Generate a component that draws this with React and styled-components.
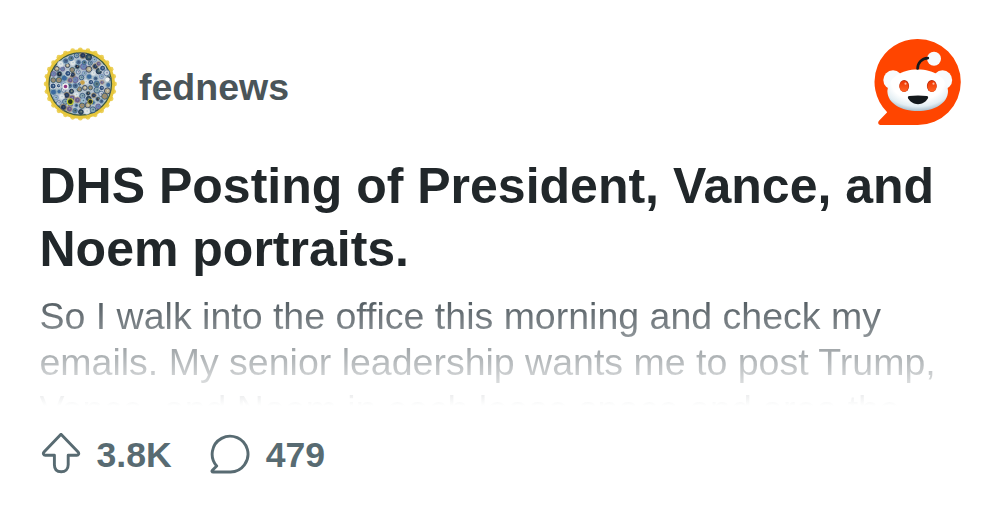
import React from "react";
import styled, { createGlobalStyle } from "styled-components";

const GlobalStyle = createGlobalStyle`
  * {
    box-sizing: border-box;
  }

  body {
    margin: 0;
    background: #ffffff;
    font-family: "Liberation Sans", Arial, sans-serif;
  }
`;

const Card = styled.article`
  display: flex;
  flex-direction: column;
  width: 1000px;
  height: 521px;
  padding: 38px 39px 0 39.5px;
  overflow: hidden;
  background: #ffffff;
`;

const Header = styled.header`
  display: flex;
  align-items: center;
  justify-content: space-between;
  height: 88px;
`;

const Community = styled.div`
  display: flex;
  align-items: center;
  gap: 19.5px;
  padding-top: 4px;
`;

const CommunityName = styled.span`
  color: #4a5559;
  font-size: 37.5px;
  font-weight: 700;
  line-height: 48px;
  margin-top: 5px;
`;

const Title = styled.h1`
  margin: 29px 0 0;
  color: #21272a;
  font-size: 50px;
  font-weight: 700;
  line-height: 62.5px;
  white-space: nowrap;
`;

const Excerpt = styled.p`
  flex: none;
  height: 113px;
  margin: 12.5px 0 0;
  overflow: hidden;
  color: transparent;
  background: linear-gradient(to bottom, #475157 0%, #ffffff 100%);
  background-clip: text;
  font-size: 37.5px;
  line-height: 46.8px;
  white-space: nowrap;
`;

const Stats = styled.footer`
  display: flex;
  align-items: center;
  gap: 37px;
  height: 50px;
  margin-top: 24.5px;
`;

const Stat = styled.div`
  display: flex;
  align-items: center;
  gap: 15px;
  color: #586b72;
  font-size: 35.6px;
  font-weight: 700;
  line-height: 48px;
`;

// rough palette of the small agency seals inside the community icon
const sealColors = [
  "#2f4f7c", "#9dbccb", "#26395a", "#5d7f88", "#e1e6e6", "#6e86b8",
  "#a38f68", "#3b6a9f", "#c3d1da", "#6a5a8c", "#345566", "#8aa9b2",
  "#4b6a90", "#b5ab8c", "#1b2b48",
];

// rings of seals, spread so that neighbours never line up
const seals = [];
[0, 6, 11.5, 17, 22.5, 28].forEach((ring, level) => {
  const count = level === 0 ? 1 : Math.round((ring * 2 * Math.PI) / 6);
  for (let i = 0; i < count; i++) {
    const n = level * 13 + i * 7 + ((i * i) % 4);
    const a = (i * 2 * Math.PI) / count + level * 0.7;
    const d = ring + ((n % 3) - 1) * 0.7;
    seals.push({
      x: 40.3 + d * Math.cos(a),
      y: 40 + d * Math.sin(a),
      r: 2.1 + (n % 4) * 0.3,
      n,
    });
  }
});

const teeth = Array.from({ length: 28 }, (_, i) => (i * 2 * Math.PI) / 28);

function CommunityIcon() {
  return (
    <svg width="80" height="80" viewBox="0 0 80 80">
      {teeth.map((a) => (
        <circle
          key={a}
          cx={40.3 + 34.2 * Math.cos(a)}
          cy={40 + 34.2 * Math.sin(a)}
          r="2.4"
          fill="#ecd05a"
        />
      ))}
      <circle cx="40.3" cy="40" r="34.8" fill="#e6c63c" />
      <circle cx="40.3" cy="40" r="31.2" fill="#b3c1cd" stroke="#3d5a45" strokeWidth="1.3" />
      {seals.map(({ x, y, r, n }) => (
        <g key={`${x}-${y}`}>
          <circle
            cx={x}
            cy={y}
            r={r}
            fill={sealColors[n % 15]}
            stroke={sealColors[(n + 4) % 15]}
            strokeWidth="0.8"
          />
          <circle
            cx={x + 0.3}
            cy={y - 0.2}
            r="0.8"
            fill={sealColors[(n * 2 + 8) % 15]}
            opacity="0.7"
          />
        </g>
      ))}
      <circle cx="25.5" cy="42.5" r="2.5" fill="#8d3482" stroke="#eeeeee" strokeWidth="1.4" />
      <circle cx="30.3" cy="57.7" r="2.9" fill="#26371d" stroke="#c4ce2e" strokeWidth="1.1" />
      <circle cx="50.3" cy="57.7" r="2.5" fill="#243329" stroke="#c6b83c" strokeWidth="0.9" />
      <circle cx="42.5" cy="38.5" r="2.3" fill="#c9a24b" />
      <circle cx="67.5" cy="35.5" r="2.2" fill="#f1f3f0" />
    </svg>
  );
}

function RedditLogo() {
  return (
    <svg width="87" height="88" viewBox="874 38 87 88">
      <defs>
        <radialGradient id="face" cx="0.5" cy="0.3" r="0.72">
          <stop offset="0.6" stopColor="#ffffff" />
          <stop offset="0.82" stopColor="#e3eef3" />
          <stop offset="1" stopColor="#9fb6c5" />
        </radialGradient>
        <linearGradient id="eye" x1="0" y1="0" x2="0" y2="1">
          <stop offset="0" stopColor="#ee3500" />
          <stop offset="1" stopColor="#ff6424" />
        </linearGradient>
      </defs>
      <path
        d="M917.8 39A43 43 0 0 1 917.8 125H880.5C878.2 125 877.4 122.5 879 120.8L887.2 112.2A42.8 42.8 0 0 1 917.8 39Z"
        fill="#ff4500"
      />
      <circle cx="893" cy="80" r="9.7" fill="#f8fbfd" />
      <circle cx="942.5" cy="80" r="9.7" fill="#f8fbfd" />
      <path
        d="M917.7 69.5C934 69.5 947 77.5 948 91C948 103.5 934 111 917.7 111S887.4 103.5 887.4 91C888.4 77.5 901.4 69.5 917.7 69.5Z"
        fill="url(#face)"
      />
      <circle cx="934" cy="58.7" r="7" fill="#f8fbfc" />
      <path
        d="M917.6 68.5C917.6 62.8 921.6 58.6 927.8 58.2"
        fill="none"
        stroke="#15191c"
        strokeWidth="2.7"
        strokeLinecap="round"
      />
      <ellipse cx="904.2" cy="86" rx="4.9" ry="5.9" fill="#b52a0c" />
      <ellipse cx="904" cy="86.3" rx="4.5" ry="5.5" fill="url(#eye)" />
      <ellipse cx="931.8" cy="86" rx="4.9" ry="5.9" fill="#b52a0c" />
      <ellipse cx="932" cy="86.3" rx="4.5" ry="5.5" fill="url(#eye)" />
      <circle cx="905.5" cy="83.7" r="1.1" fill="#ffb79b" />
      <circle cx="933.5" cy="83.7" r="1.1" fill="#ffb79b" />
      <path
        d="M909.3 96C914.5 95.3 921.5 95.3 926.7 96C928.1 96.3 928.4 97.2 927.9 98.3C926 102 922.2 104.2 918 104.2S910 102 908.1 98.3C907.6 97.2 907.9 96.3 909.3 96Z"
        fill="#14191c"
      />
    </svg>
  );
}

const StatIcon = styled.svg`
  width: 42px;
  height: 44px;
  fill: none;
  stroke: currentColor;
  stroke-width: 2.9px;
  stroke-linejoin: round;
`;

function UpvoteIcon() {
  return (
    <StatIcon viewBox="39.5 434 42 44">
      <path d="M60.5 435.3L77.6 453C78.9 454.4 78 456.2 76.4 456.2H67.7V465.7C67.7 470.3 64.8 472.8 60.7 472.8S53.9 470.3 53.9 465.7V456.2H44.8C43.1 456.2 42.2 454.4 43.5 453Z" />
    </StatIcon>
  );
}

function CommentIcon() {
  return (
    <StatIcon viewBox="208 434 42 44">
      <path d="M229.6 473H212.2C210.9 473 210.6 472 211.4 471.2L215.7 467A17.9 17.9 0 1 1 229.6 473Z" />
    </StatIcon>
  );
}

function App() {
  return (
    <>
      <GlobalStyle />
      <Card>
        <Header>
          <Community>
            <CommunityIcon />
            <CommunityName>fednews</CommunityName>
          </Community>
          <RedditLogo />
        </Header>
        <Title>
          DHS Posting of President, Vance, and
          <br />
          Noem portraits.
        </Title>
        <Excerpt>
          So I walk into the office this morning and check my
          <br />
          emails. My senior leadership wants me to post Trump,
          <br />
          Vance, and Noem in each lease space and area the
        </Excerpt>
        <Stats>
          <Stat>
            <UpvoteIcon />
            <span>3.8K</span>
          </Stat>
          <Stat>
            <CommentIcon />
            <span>479</span>
          </Stat>
        </Stats>
      </Card>
    </>
  );
}

export default App;
